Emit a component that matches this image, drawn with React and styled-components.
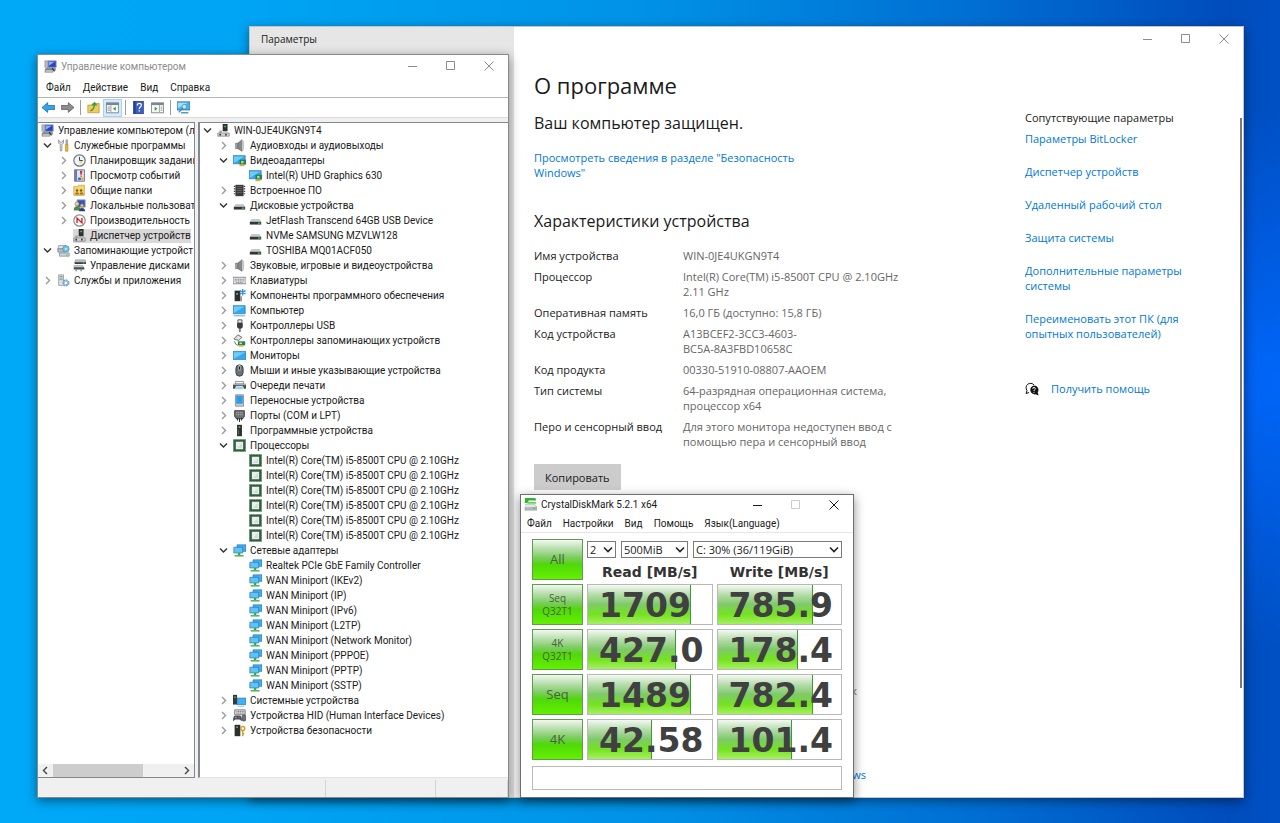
import { useState } from 'react';
import styled, { createGlobalStyle } from 'styled-components';

const GlobalStyle = createGlobalStyle`
* {
  box-sizing: border-box;
}
body {
  margin: 0;
  font-family: "Open Sans", "Noto Sans", sans-serif;
  font-size: 10px;
  color: #1a1a1a;
}
button, select, input {
  font-family: inherit;
  font-size: inherit;
  color: inherit;
}
`;

const Desktop = styled.main`
position: relative;
min-height: 100vh;
overflow: hidden;
background:
  radial-gradient(circle at 100% 46%, rgba(0, 104, 255, 0.9), rgba(0, 104, 255, 0) 20%),
  linear-gradient(90deg, #00a9f8 0%, #00a4f4 20%, #0092e6 50%, #0070d4 75%, #004cbc 96%, #0050c4 100%);
`;

/* ---------- window frame ---------- */

const Window = styled.section`
position: absolute;
display: flex;
background-color: #ffffff;
border: 1px solid ${props => props.$edge || '#8a8a8a'};
box-shadow: 0 3px 10px rgba(0, 0, 0, 0.45);
`;

const SettingsWindow = styled(Window)`
top: 26px;
right: 36px;
bottom: 25px;
left: 249px;
`;

const ManagementWindow = styled(Window)`
top: 54px;
bottom: 25px;
left: 37px;
width: 472px;
flex-direction: column;
font-family: Roboto, "Open Sans", sans-serif;
`;

const DiskWindow = styled(Window)`
left: 520px;
bottom: 25px;
width: 334px;
flex-direction: column;
font-family: Roboto, "Open Sans", sans-serif;
`;

const TitleBar = styled.header`
display: flex;
align-items: center;
height: ${props => props.$height}px;
padding-left: ${props => props.$indent}px;
gap: 4px;
color: ${props => props.$active ? '#1a1a1a' : '#8c8c8c'};
`;

const Title = styled.h2`
flex: 1;
margin: 0;
font-size: 10px;
font-weight: 400;
white-space: nowrap;
`;

const Controls = styled.div`
display: flex;
color: ${props => props.$active ? '#1a1a1a' : '#8c8c8c'};
`;

const ControlButton = styled.button`
display: flex;
align-items: center;
justify-content: center;
width: 38px;
height: 20px;
padding: 0;
border: none;
background: none;
&:disabled {
  color: #cccccc;
}
&:hover:enabled {
  background-color: #e5e5e5;
}
`;

function WindowControls({ active, fixed }) {
    return (
        <Controls $active={active}>
            <ControlButton aria-label="Свернуть">
                <svg width="10" height="10" viewBox="0 0 10 10"><path d="M0 5.5h9" stroke="currentColor" /></svg>
            </ControlButton>
            <ControlButton aria-label="Развернуть" disabled={fixed}>
                <svg width="10" height="10" viewBox="0 0 10 10"><path d="M.5 .5h8v8h-8z" fill="none" stroke="currentColor" /></svg>
            </ControlButton>
            <ControlButton aria-label="Закрыть">
                <svg width="10" height="10" viewBox="0 0 10 10"><path d="M.5 .5l9 9M9.5 .5l-9 9" stroke="currentColor" /></svg>
            </ControlButton>
        </Controls>
    );
}

const MenuBar = styled.nav`
display: flex;
align-items: center;
height: ${props => props.$height}px;
padding-left: ${props => props.$indent}px;
gap: ${props => props.$gap}px;
`;

const MenuButton = styled.button`
padding: 0;
border: none;
background: none;
white-space: nowrap;
`;

/* ---------- icons ---------- */

const Svg = styled.svg`
flex: none;
width: 13px;
height: 13px;
`;

const screen = (
    <>
        <path d="M0 2h15v10H0z" fill="#35a8ec" stroke="#2277b5" strokeWidth=".8" />
        <path d="M1 3h13L1 11z" fill="#6fcbf8" />
    </>
);

const drawings = {
    management: (
        <>
            <path d="M1 1h4v8H1z" fill="#b8bcc2" stroke="#777" strokeWidth=".6" />
            <path d="M5 1h10v8H5z" fill="#2547c4" stroke="#9da4ad" />
            <path d="M6 2h7L6 7z" fill="#8fb0f5" />
            <path d="M1 11l3-2h10l1 4H1z" fill="#8a90a0" />
            <path d="M2 12h9v3H1z" fill="#c9cdd3" stroke="#555" strokeWidth=".6" />
            <path d="M10 10l3 4" stroke="#333" strokeWidth="1.4" />
        </>
    ),
    tools: (
        <>
            <path d="M2 1v4l2 2v7.500h2V7l2-2V1L6 4H4z" fill="#dfe2e6" stroke="#777" strokeWidth=".8" />
            <path d="M11 1h2v6h-2z" fill="#b0b0b0" stroke="#666" strokeWidth=".5" />
            <path d="M10.500 7h3v8h-3z" fill="#f2b929" stroke="#b17a0a" strokeWidth=".7" />
        </>
    ),
    clock: (
        <>
            <circle cx="8" cy="8" r="7" fill="#eef3f8" stroke="#6f7882" strokeWidth="1.500" />
            <path d="M8 8h4a4 4 0 0 1-4 4z" fill="#f4d68a" />
            <path d="M8 3.500V8h4" fill="none" stroke="#444" strokeWidth="1.200" />
        </>
    ),
    events: (
        <>
            <path d="M2 1h12v14H2z" fill="#dfe6f2" stroke="#4b5a7c" />
            <path d="M2 1h3v14H2z" fill="#6d7ea8" />
            <path d="M8.500 2h3l-.7 5H9.200zM9.200 8h1.600v1.600H9.200z" fill="#d22a2a" />
            <circle cx="8" cy="12" r="2" fill="#3d6fd0" />
            <circle cx="11.500" cy="12" r="1.700" fill="#e5b427" />
        </>
    ),
    folders: (
        <>
            <path d="M1 3h5l1-1.500h7V14H1z" fill="#f5d576" stroke="#c79a2d" strokeWidth=".8" />
            <circle cx="5" cy="8" r="1.500" fill="#7d5b18" />
            <circle cx="10" cy="8" r="1.500" fill="#7d5b18" />
            <path d="M2.500 13q0-3 2.500-3t2.500 3zM8 13q0-3 2.500-3t2.500 3z" fill="#9a7426" />
        </>
    ),
    users: (
        <>
            <path d="M5 1h10v9H5z" fill="#2d59c8" stroke="#9aa4b5" />
            <circle cx="5" cy="6" r="2.500" fill="#f1cf9a" stroke="#7a5b2b" strokeWidth=".6" />
            <path d="M1 14q0-5 4-5t4 5z" fill="#4b8a4b" />
            <circle cx="11" cy="8" r="2.200" fill="#e8bf85" stroke="#7a5b2b" strokeWidth=".6" />
            <path d="M7.500 15q0-4 3.500-4t4 4z" fill="#2b3d82" />
        </>
    ),
    performance: (
        <>
            <circle cx="8" cy="8" r="7" fill="#ffffff" stroke="#8d8d8d" strokeWidth="1.500" />
            <path d="M5 11V5l6 6V5" fill="none" stroke="#d91e1e" strokeWidth="1.700" />
        </>
    ),
    device: (
        <>
            <path d="M7 0h6v9H7z" fill="#2d2f31" />
            <path d="M9 2h2v2H9z" fill="#57c84d" />
            <path d="M1 11h14v4H1z" fill="#d5d8db" stroke="#6e7276" strokeWidth=".8" />
            <path d="M3 8h3v3H3z" fill="#9da1a5" />
            <path d="M3 12h2v2H3zM10 12h2v2h-2z" fill="#333" />
        </>
    ),
    storage: (
        <>
            <path d="M2 2h9l2 4H1z" fill="#e2e6ea" stroke="#727a83" strokeWidth=".8" />
            <path d="M1 6h9v4H1z" fill="#b6bec7" stroke="#727a83" strokeWidth=".8" />
            <circle cx="11" cy="6" r="4" fill="#74c3e6" stroke="#4a89ab" strokeWidth=".8" />
            <circle cx="11" cy="6" r="1" fill="#fff" />
            <path d="M3 11h12v4H3z" fill="#cfd4da" stroke="#727a83" strokeWidth=".8" />
            <path d="M11 13h2v1h-2z" fill="#36c236" />
        </>
    ),
    diskManagement: (
        <>
            <path d="M3 1h12l1 3v2H2V4z" fill="#3a3d40" />
            <path d="M3 1h12l1 3H2z" fill="#b7babd" />
            <path d="M12 4.500h2v1h-2z" fill="#4be04b" />
            <path d="M1 8h11l2 3v2H1z" fill="#4b4e52" />
            <path d="M1 8h11l1 2H1z" fill="#c6c9cc" />
            <path d="M3 13h2v2H3zM9 13h2v2H9z" fill="#8d9094" />
        </>
    ),
    services: (
        <>
            <path d="M2 1h6v13H2z" fill="#dde2e8" stroke="#7b8794" strokeWidth=".8" />
            <path d="M3 3h4M3 5h4M3 7h4" stroke="#6b9f6b" />
            <circle cx="11" cy="11" r="3.200" fill="none" stroke="#6a97bf" strokeWidth="2.400" strokeDasharray="2 .9" />
            <circle cx="11" cy="11" r="2.500" fill="none" stroke="#8fb8da" strokeWidth="1.500" />
        </>
    ),
    audio: (
        <>
            <path d="M3 5h3v7H3z" fill="#9da1a5" stroke="#666" strokeWidth=".6" />
            <path d="M6 5l5-4v14l-5-3z" fill="#85898d" stroke="#555" strokeWidth=".6" />
            <path d="M11 1l2 2v10l-2 2z" fill="#d4d6d8" stroke="#888" strokeWidth=".5" />
        </>
    ),
    video: (
        <>
            {screen}
            <path d="M8 7h8v6H8z" fill="#2f7d4a" />
            <path d="M10 8.500h3v3h-3z" fill="#9fe0ac" />
            <path d="M8 13h6v2H8z" fill="#e0a82e" />
        </>
    ),
    firmware: (
        <>
            <path d="M3 1h10v14H3z" fill="#3b3b3b" />
            <path d="M1 3h2M1 6h2M1 9h2M1 12h2M13 3h2M13 6h2M13 9h2M13 12h2" stroke="#444" strokeWidth="1.500" />
            <path d="M5 3h6M5 5.500h6M5 8h6M5 10.500h6" stroke="#777" strokeWidth=".8" />
        </>
    ),
    disk: (
        <>
            <path d="M3 6h10l2 3.500H1z" fill="#c7cacc" />
            <path d="M1 9.500h14V13H1z" fill="#333638" />
            <path d="M11 10.500h3v1.500h-3z" fill="#4cc84c" />
        </>
    ),
    keyboard: (
        <>
            <path d="M0 4h16v8H0z" fill="#e3e5e7" stroke="#777b80" />
            <path d="M2 6.500h12M2 8.500h12M4 10.500h8" stroke="#777b80" strokeDasharray="1.500 .6" />
        </>
    ),
    component: (
        <>
            <path d="M2 2h7v13H2z" fill="#2c2e30" />
            <path d="M4 5h2v2H4z" fill="#54cf4a" />
            <path d="M9 9h2v6H9z" fill="#8b8e91" />
            <path d="M12 0v8M8.500 2l7 4M15.500 2l-7 4" stroke="#2b8fe0" strokeWidth="1.600" />
        </>
    ),
    computer: (
        <>
            {screen}
            <path d="M1 14.500h14" stroke="#7fb6d9" strokeWidth="1.500" />
        </>
    ),
    usb: (
        <>
            <path d="M6 1h5v4H6z" fill="#e6e6e6" stroke="#444" />
            <path d="M5 5h7v5l-2 2H7l-2-2z" fill="#3c3c3c" />
            <path d="M8.500 12v4" stroke="#3c3c3c" strokeWidth="1.500" />
        </>
    ),
    storageController: (
        <>
            <path d="M1 6l5-5 5 3-4 4z" fill="#dfe1e3" stroke="#555" />
            <path d="M2 9q0 4 4 5" fill="none" stroke="#555" />
            <path d="M6 9h9v5H6z" fill="#2f7d4a" />
            <path d="M8 10.500h3v2H8z" fill="#c8e8cc" />
            <path d="M7 14h6v1.500H7z" fill="#d9a52c" />
        </>
    ),
    monitor: (
        <>
            <path d="M0 3h16v10H0z" fill="#35a8ec" stroke="#2277b5" strokeWidth=".8" />
            <path d="M1 4h14L1 12z" fill="#6fcbf8" />
        </>
    ),
    mouse: (
        <>
            <rect x="3.500" y="1" width="9" height="14" rx="4.500" fill="#6b7278" stroke="#33373a" />
            <path d="M8 1v7" stroke="#c9cdd1" strokeWidth="2.400" />
            <path d="M8 3v4" stroke="#222" strokeWidth="1.300" />
        </>
    ),
    printer: (
        <>
            <path d="M3 3h10v3H3z" fill="#f4f4f4" stroke="#555" strokeWidth=".7" />
            <path d="M0 6h16v6H0z" fill="#4b5054" />
            <path d="M0 6h16v1.500H0z" fill="#a7abae" />
            <path d="M4 9h8l1 4H3z" fill="#8fd3f3" stroke="#f4f4f4" />
        </>
    ),
    portable: (
        <>
            <path d="M3 1h10v14H3z" fill="#c8cdd2" stroke="#6b7176" strokeWidth=".8" />
            <path d="M4 2h8v10H4z" fill="#2d9be6" />
        </>
    ),
    port: (
        <>
            <path d="M2 2h12v7l-2 3H4L2 9z" fill="#6c7074" stroke="#303336" />
            <path d="M4 4.500h8M4 7h8" stroke="#c8cbce" strokeDasharray="1.200 1" />
            <path d="M5.500 11v3M8 11v5M10.500 11v3" stroke="#303336" strokeWidth="1.300" />
        </>
    ),
    software: (
        <>
            <path d="M5 1h6v14H5z" fill="#2c2e30" />
            <path d="M7 3h2v2H7z" fill="#54cf4a" />
            <path d="M7 7v6" stroke="#777" />
        </>
    ),
    cpu: (
        <>
            <path d="M2 2h12v12H2z" fill="#ededed" stroke="#2a6340" strokeWidth="3" />
            <path d="M.5 .5h15v15H.5z" fill="none" stroke="#66774d" strokeDasharray="1 1" />
            <path d="M5 11l6-6v6z" fill="#d9d9d9" />
        </>
    ),
    network: (
        <>
            <path d="M5 1h11v8H5z" fill="#3fb0f0" stroke="#2370ab" strokeWidth=".8" />
            <path d="M1 4h11v7H1z" fill="#5fc3f7" stroke="#2370ab" strokeWidth=".8" />
            <path d="M6 11h3v3H6z" fill="#3aa84a" />
            <path d="M2 14.500h11" stroke="#55b95f" strokeWidth="2" />
        </>
    ),
    system: (
        <>
            <path d="M0 1h5v12H0z" fill="#34383b" />
            <path d="M1.500 3h2v1.500h-2z" fill="#54cf4a" />
            <path d="M5 5h11v8H5z" fill="#3fb0f0" stroke="#2370ab" strokeWidth=".8" />
            <path d="M6 15h8" stroke="#7fb6d9" />
        </>
    ),
    hid: (
        <>
            <path d="M2 1h13v6H2z" fill="#dadcde" stroke="#6d7175" />
            <path d="M4 3h10M4 5h10" stroke="#6d7175" strokeDasharray="1.500 .7" />
            <path d="M0 15q0-7 3-7h5q3 0 3 7l-3-2H3z" fill="#4c5359" />
            <rect x="11" y="7" width="5" height="8" rx="2.500" fill="#6b7278" stroke="#33373a" strokeWidth=".6" />
            <circle cx="3.500" cy="10.500" r="1" fill="#68b8ee" />
            <circle cx="7.500" cy="10.500" r="1" fill="#d84a3a" />
        </>
    ),
    security: (
        <>
            <path d="M2 1h7v14H2z" fill="#2c2e30" />
            <path d="M4 3h2v2H4z" fill="#54cf4a" />
            <circle cx="12" cy="5.500" r="2.500" fill="none" stroke="#d69b26" strokeWidth="1.700" />
            <path d="M12 8v7M12 12h2" stroke="#d69b26" strokeWidth="1.700" />
        </>
    ),
    back: <path d="M0 8l7-6v3.500h8.500v5H7V14z" fill="#32a5e8" stroke="#1b73b0" />,
    forward: <path d="M16 8L9 2v3.500H.5v5H9V14z" fill="#8d8d8d" stroke="#606060" />,
    up: (
        <>
            <path d="M1 5h5l1-2h8v11.500H1z" fill="#f3cb5c" stroke="#b68a2a" strokeWidth=".8" />
            <path d="M4 12q5-1 5-8" fill="none" stroke="#3ca03c" strokeWidth="1.800" />
            <path d="M5 5.500L9.500 1 13 5.500z" fill="#3ca03c" />
        </>
    ),
    consoleTree: (
        <>
            <path d="M.5 2.500h15v12H.5z" fill="#f7f7f7" stroke="#6f7780" />
            <path d="M0 2h16v3H0z" fill="#7d858e" />
            <path d="M6 5v9M2 7.500h3M2 9.500h3M2 11.500h3" stroke="#8c949c" />
            <path d="M12 7v5L8.500 9.500z" fill="#35a035" />
        </>
    ),
    actionPane: (
        <>
            <path d="M.5 2.500h15v12H.5z" fill="#f7f7f7" stroke="#6f7780" />
            <path d="M0 2h16v3H0z" fill="#7d858e" />
            <path d="M10.500 5v9M12 7.500h2M12 9.500h2M12 11.500h2" stroke="#8c949c" />
            <path d="M4.500 7v5L8 9.500z" fill="#35a035" />
        </>
    ),
    help: (
        <>
            <path d="M2 0h12v16H2z" fill="#3d5fc4" stroke="#27408f" />
            <path d="M2 0h2.500v16H2z" fill="#27408f" />
            <path d="M6.500 5.500q0-2.500 2.500-2.500t2.500 2.200q0 1.300-1.300 2.200T9 10" fill="none" stroke="#fff" strokeWidth="1.500" />
            <path d="M8.200 11.500h1.600V13H8.200z" fill="#fff" />
        </>
    ),
    scan: (
        <>
            <path d="M0 1h16v10H0z" fill="#4ab4ea" stroke="#3c6f92" />
            <path d="M1 2h12L1 9z" fill="#a2def8" />
            <circle cx="9" cy="7" r="2.800" fill="#bfe7fa" stroke="#3f88b4" strokeWidth=".8" />
            <path d="M7 9l-5 5" stroke="#3c88b8" strokeWidth="1.600" />
            <path d="M5 14.500h9" stroke="#3c88b8" strokeWidth="1.600" />
        </>
    ),
    diskMark: (
        <>
            <path d="M1 0h13l1 3H6L4 6H1z" fill="#2fb52f" />
            <path d="M4 5h11v2H4z" fill="#59cf4c" />
            <path d="M2 8h11l3 3v4H1z" fill="#b7bbbf" stroke="#8a8e92" strokeWidth=".6" />
            <path d="M2 8h11l2 3H1z" fill="#e4e6e8" />
            <path d="M11 12.500h3" stroke="#43c443" strokeWidth="1.500" />
        </>
    ),
};

function Icon({ name }) {
    return <Svg viewBox="0 0 16 16" aria-hidden="true">{drawings[name]}</Svg>;
}

/* ---------- tree ---------- */

const List = styled.ul`
margin: 0;
padding: 0;
list-style: none;
`;

const Row = styled.div`
display: flex;
align-items: center;
height: 15px;
padding-left: ${props => props.$depth * 16}px;
`;

const Toggle = styled.button`
display: flex;
align-items: center;
justify-content: center;
flex: none;
width: 16px;
height: 15px;
padding: 0 3px 0 0;
border: none;
background: none;
color: ${props => props.$open ? '#333333' : '#9a9a9a'};
`;

const Spacer = styled.span`
flex: none;
width: 16px;
`;

const Label = styled.span`
display: flex;
align-items: center;
gap: 4px;
height: 14px;
white-space: nowrap;
background-color: ${props => props.$selected ? '#d9d9d9' : 'transparent'};
`;

function Chevron({ open }) {
    return (
        <svg width="9" height="9" viewBox="0 0 9 9" aria-hidden="true">
            <path d={open ? 'M1 2.500l3.500 3.500L8 2.500' : 'M3 1l3.500 3.500L3 8'} fill="none" stroke="currentColor" strokeWidth="1.400" />
        </svg>
    );
}

function TreeNode({ node, depth }) {
    const [open, setOpen] = useState(Boolean(node.children));
    const expandable = node.children || node.closed;

    return (
        <li>
            <Row $depth={depth}>
                {expandable && (
                    <Toggle $open={open} aria-expanded={open} aria-label={node.name} onClick={() => setOpen(!open)}>
                        <Chevron open={open} />
                    </Toggle>
                )}
                {!expandable && !node.root && <Spacer />}
                <Label $selected={node.selected}><Icon name={node.icon} />{node.name}</Label>
            </Row>
            {open && node.children && (
                <List>
                    {node.children.map((child, i) => <TreeNode key={i} node={child} depth={depth + 1} />)}
                </List>
            )}
        </li>
    );
}

const consoleNodes = [
    { name: 'Управление компьютером (л', icon: 'management', root: true },
    {
        name: 'Служебные программы', icon: 'tools', children: [
            { name: 'Планировщик заданий', icon: 'clock', closed: true },
            { name: 'Просмотр событий', icon: 'events', closed: true },
            { name: 'Общие папки', icon: 'folders', closed: true },
            { name: 'Локальные пользовате', icon: 'users', closed: true },
            { name: 'Производительность', icon: 'performance', closed: true },
            { name: 'Диспетчер устройств', icon: 'device', selected: true },
        ],
    },
    {
        name: 'Запоминающие устройст', icon: 'storage', children: [
            { name: 'Управление дисками', icon: 'diskManagement' },
        ],
    },
    { name: 'Службы и приложения', icon: 'services', closed: true },
];

const cpus = Array.from({ length: 6 }, () => ({ name: 'Intel(R) Core(TM) i5-8500T CPU @ 2.10GHz', icon: 'cpu' }));

const adapters = [
    'Realtek PCIe GbE Family Controller',
    'WAN Miniport (IKEv2)',
    'WAN Miniport (IP)',
    'WAN Miniport (IPv6)',
    'WAN Miniport (L2TP)',
    'WAN Miniport (Network Monitor)',
    'WAN Miniport (PPPOE)',
    'WAN Miniport (PPTP)',
    'WAN Miniport (SSTP)',
].map(name => ({ name, icon: 'network' }));

const deviceNodes = [
    {
        name: 'WIN-0JE4UKGN9T4', icon: 'device', children: [
            { name: 'Аудиовходы и аудиовыходы', icon: 'audio', closed: true },
            { name: 'Видеоадаптеры', icon: 'video', children: [{ name: 'Intel(R) UHD Graphics 630', icon: 'video' }] },
            { name: 'Встроенное ПО', icon: 'firmware', closed: true },
            {
                name: 'Дисковые устройства', icon: 'disk', children: [
                    { name: 'JetFlash Transcend 64GB USB Device', icon: 'disk' },
                    { name: 'NVMe SAMSUNG MZVLW128', icon: 'disk' },
                    { name: 'TOSHIBA MQ01ACF050', icon: 'disk' },
                ],
            },
            { name: 'Звуковые, игровые и видеоустройства', icon: 'audio', closed: true },
            { name: 'Клавиатуры', icon: 'keyboard', closed: true },
            { name: 'Компоненты программного обеспечения', icon: 'component', closed: true },
            { name: 'Компьютер', icon: 'computer', closed: true },
            { name: 'Контроллеры USB', icon: 'usb', closed: true },
            { name: 'Контроллеры запоминающих устройств', icon: 'storageController', closed: true },
            { name: 'Мониторы', icon: 'monitor', closed: true },
            { name: 'Мыши и иные указывающие устройства', icon: 'mouse', closed: true },
            { name: 'Очереди печати', icon: 'printer', closed: true },
            { name: 'Переносные устройства', icon: 'portable', closed: true },
            { name: 'Порты (COM и LPT)', icon: 'port', closed: true },
            { name: 'Программные устройства', icon: 'software', closed: true },
            { name: 'Процессоры', icon: 'cpu', children: cpus },
            { name: 'Сетевые адаптеры', icon: 'network', children: adapters },
            { name: 'Системные устройства', icon: 'system', closed: true },
            { name: 'Устройства HID (Human Interface Devices)', icon: 'hid', closed: true },
            { name: 'Устройства безопасности', icon: 'security', closed: true },
        ],
    },
];

/* ---------- computer management ---------- */

const Toolbar = styled.div`
display: flex;
align-items: center;
height: 21px;
padding-left: 1px;
border-top: 1px solid #b4b4b4;
border-bottom: 1px solid #dcdcdc;
`;

const ToolButton = styled.button`
display: flex;
align-items: center;
justify-content: center;
width: 19px;
height: 18px;
padding: 0;
border: 1px solid ${props => props.$pressed ? '#a8d4f5' : 'transparent'};
background-color: ${props => props.$pressed ? '#d3eafb' : 'transparent'};
`;

const Divider = styled.span`
width: 1px;
height: 15px;
margin: 0 3px;
background-color: #9c9c9c;
`;

const Panes = styled.div`
display: flex;
flex: 1;
gap: 3px;
min-height: 0;
padding-top: 4px;
background-color: #f0f0f0;
`;

const Pane = styled.div`
display: flex;
flex-direction: column;
min-width: 0;
overflow: hidden;
background-color: #ffffff;
border: 1px solid #828790;
`;

const ConsolePane = styled(Pane)`
flex: 0 0 157px;
justify-content: space-between;
border-left: none;
& > ul {
  padding-left: 3px;
}
`;

const DevicePane = styled(Pane)`
flex: 1;
border-width: 1px 0 1px 2px;
border-bottom-color: #e3e3e3;
& > ul {
  padding-left: 1px;
}
`;

const ScrollTrack = styled.div`
display: flex;
align-items: center;
height: 13px;
background-color: #f0f0f0;
`;

const ScrollArrow = styled.button`
display: flex;
align-items: center;
justify-content: center;
width: 15px;
height: 13px;
padding: 0;
border: none;
background: none;
color: #444444;
transform: ${props => props.$left ? 'scaleX(-1)' : 'none'};
`;

const ScrollThumb = styled.span`
width: 90px;
height: 13px;
margin-right: auto;
background-color: #cdcdcd;
`;

const StatusBar = styled.footer`
display: flex;
height: 19px;
background-color: #f0f0f0;
`;

const StatusCell = styled.span`
flex: ${props => props.$grow ? '1' : '0 0 110px'};
margin-top: 2px;
border-right: 1px solid #d4d4d4;
&:last-child {
  flex-basis: 72px;
}
`;

function ComputerManagement() {
    return (
        <ManagementWindow>
            <TitleBar $height={22} $indent={6}>
                <Icon name="management" />
                <Title>Управление компьютером</Title>
                <WindowControls />
            </TitleBar>
            <MenuBar $height={20} $indent={8} $gap={12}>
                <MenuButton>Файл</MenuButton>
                <MenuButton>Действие</MenuButton>
                <MenuButton>Вид</MenuButton>
                <MenuButton>Справка</MenuButton>
            </MenuBar>
            <Toolbar>
                <ToolButton aria-label="Назад"><Icon name="back" /></ToolButton>
                <ToolButton aria-label="Вперед"><Icon name="forward" /></ToolButton>
                <Divider />
                <ToolButton aria-label="Вверх"><Icon name="up" /></ToolButton>
                <ToolButton aria-label="Дерево консоли" $pressed><Icon name="consoleTree" /></ToolButton>
                <Divider />
                <ToolButton aria-label="Справка"><Icon name="help" /></ToolButton>
                <ToolButton aria-label="Панель действий"><Icon name="actionPane" /></ToolButton>
                <Divider />
                <ToolButton aria-label="Обновить конфигурацию"><Icon name="scan" /></ToolButton>
            </Toolbar>
            <Panes>
                <ConsolePane>
                    <List>
                        {consoleNodes.map((node, i) => <TreeNode key={i} node={node} depth={0} />)}
                    </List>
                    <ScrollTrack>
                        <ScrollArrow $left aria-label="Прокрутить влево"><Chevron /></ScrollArrow>
                        <ScrollThumb />
                        <ScrollArrow aria-label="Прокрутить вправо"><Chevron /></ScrollArrow>
                    </ScrollTrack>
                </ConsolePane>
                <DevicePane>
                    <List>
                        {deviceNodes.map((node, i) => <TreeNode key={i} node={node} depth={0} />)}
                    </List>
                </DevicePane>
            </Panes>
            <StatusBar>
                <StatusCell $grow />
                <StatusCell />
                <StatusCell />
            </StatusBar>
        </ManagementWindow>
    );
}

/* ---------- settings ---------- */

const SettingsNav = styled.aside`
flex: 0 0 264px;
padding: 5px 11px;
line-height: 15px;
background-color: #e6e6e6;
`;

const SettingsMain = styled.div`
display: flex;
flex: 1;
flex-direction: column;
min-width: 0;
`;

const SettingsBar = styled.header`
display: flex;
justify-content: flex-end;
padding: 2px 0;
`;

const SettingsBody = styled.div`
display: flex;
flex: 1;
justify-content: space-between;
padding: 20px 1px 0 20px;
font-size: 11px;
line-height: 15px;
`;

const About = styled.div`
flex: 0 0 370px;
`;

const PageTitle = styled.h1`
margin: 0;
font-size: 22px;
font-weight: 400;
line-height: 28px;
`;

const Heading = styled.h3`
margin: ${props => props.$top}px 0 0;
font-size: 16px;
font-weight: 400;
line-height: 22px;
`;

const StyledLink = styled.a`
color: #0078d7;
text-decoration: none;
&:hover {
  color: #666666;
}
`;

const Security = styled.p`
width: 280px;
margin: 16px 0 0;
`;

const Specs = styled.dl`
display: grid;
grid-template-columns: 149px 219px;
row-gap: 6px;
margin: 16px 0 15px;
`;

const SpecValue = styled.dd`
margin: 0;
color: #666666;
white-space: pre-line;
`;

const CopyButton = styled.button`
height: 26px;
padding: 0 11px;
border: none;
background-color: #cccccc;
`;

const LowerText = styled.div`
display: flex;
flex-direction: column;
align-items: flex-end;
gap: 69px;
width: 332px;
margin-top: 193px;
color: #666666;
`;

const Muted = styled.span`
padding-right: 9px;
`;

const Aside = styled.aside`
display: flex;
gap: 45px;
`;

const Related = styled.div`
display: flex;
flex-direction: column;
align-items: flex-start;
gap: 18px;
width: 170px;
margin-top: 39px;
`;

const RelatedTitle = styled.h4`
margin: 0 0 -12px;
font-size: 11px;
font-weight: 400;
`;

const HelpLine = styled.div`
display: flex;
align-items: center;
gap: 12px;
margin-top: 22px;
`;

const ScrollLine = styled.span`
width: 2px;
height: 570px;
margin-top: 47px;
background-color: #7a7a7a;
`;

const specs = [
    ['Имя устройства', 'WIN-0JE4UKGN9T4'],
    ['Процессор', 'Intel(R) Core(TM) i5-8500T CPU @ 2.10GHz\n2.11 GHz'],
    ['Оперативная память', '16,0 ГБ (доступно: 15,8 ГБ)'],
    ['Код устройства', 'A13BCEF2-3CC3-4603-\nBC5A-8A3FBD10658C'],
    ['Код продукта', '00330-51910-08807-AAOEM'],
    ['Тип системы', '64-разрядная операционная система, процессор x64'],
    ['Перо и сенсорный ввод', 'Для этого монитора недоступен ввод с помощью пера и сенсорный ввод'],
];

const related = [
    'Параметры BitLocker',
    'Диспетчер устройств',
    'Удаленный рабочий стол',
    'Защита системы',
    'Дополнительные параметры системы',
    'Переименовать этот ПК (для опытных пользователей)',
];

function SpecRow({ name, value }) {
    return (
        <>
            <dt>{name}</dt>
            <SpecValue>{value}</SpecValue>
        </>
    );
}

function Settings() {
    return (
        <SettingsWindow $edge="#c4c4c4">
            <SettingsNav>Параметры</SettingsNav>
            <SettingsMain>
                <SettingsBar><WindowControls /></SettingsBar>
                <SettingsBody>
                    <About>
                        <PageTitle>О программе</PageTitle>
                        <Heading $top={13}>Ваш компьютер защищен.</Heading>
                        <Security>
                            <StyledLink href="#security">Просмотреть сведения в разделе "Безопасность Windows"</StyledLink>
                        </Security>
                        <Heading $top={30}>Характеристики устройства</Heading>
                        <Specs>
                            {specs.map(([name, value]) => (
                                <SpecRow key={name} name={name} value={value} />
                            ))}
                        </Specs>
                        <CopyButton>Копировать</CopyButton>
                        <LowerText>
                            <Muted>к</Muted>
                            <StyledLink href="#windows">Windows</StyledLink>
                        </LowerText>
                    </About>
                    <Aside>
                        <Related>
                            <RelatedTitle>Сопутствующие параметры</RelatedTitle>
                            {related.map(text => <StyledLink key={text} href="#related">{text}</StyledLink>)}
                            <HelpLine>
                                <svg width="14" height="14" viewBox="0 0 14 14" aria-hidden="true">
                                    <path d="M2 8.500L1 11.500l3-1M2 8.500A4.300 4.300 0 1 1 9 3" fill="none" stroke="#111" />
                                    <path d="M9 3.500a4.400 4.400 0 0 1 3.700 6.800l.9 3.200-3-1.200A4.400 4.400 0 1 1 9 3.500z" fill="#111" />
                                    <path d="M7.700 6.800q0-1.300 1.300-1.300t1.300 1.200q0 .6-.6 1T9 9M9 9.800v1" fill="none" stroke="#fff" />
                                </svg>
                                <StyledLink href="#help">Получить помощь</StyledLink>
                            </HelpLine>
                        </Related>
                        <ScrollLine />
                    </Aside>
                </SettingsBody>
            </SettingsMain>
        </SettingsWindow>
    );
}

/* ---------- CrystalDiskMark ---------- */

const DiskBody = styled.div`
padding: 6px 11px 7px;
border-top: 1px solid #e6e6e6;
`;

const Results = styled.table`
display: grid;
grid-template-columns: 51px 1fr 1fr;
grid-template-rows: 19px 18px;
grid-auto-rows: 41px;
gap: 4px;
margin-bottom: 6px;
thead, tbody, tr {
  display: contents;
}
th, td {
  padding: 0;
}
`;

const AllCell = styled.th`
grid-row: span 2;
`;

const TestButton = styled.button`
width: 100%;
height: 41px;
padding: 0;
border: 1px solid #5f9c50;
background: linear-gradient(#f2f8f0 0%, #b9dfae 22%, #7dcc62 45%, #4fd80a 62%, #64f000 100%);
color: #4a6040;
font-family: "Open Sans", sans-serif;
font-size: ${props => props.$small ? '10px' : '13px'};
font-weight: 400;
line-height: 13px;
white-space: pre-line;
`;

const Options = styled.td`
display: flex;
align-items: flex-end;
grid-column: span 2;
gap: 5px;
`;

const SelectWrap = styled.span`
position: relative;
flex: ${props => props.$width ? `0 0 ${props.$width}px` : '1'};
height: 17px;
svg {
  position: absolute;
  top: 4px;
  right: 3px;
  pointer-events: none;
}
`;

const Select = styled.select`
appearance: none;
width: 100%;
height: 17px;
padding: 0 2px;
border: 1px solid #7a7a7a;
border-radius: 0;
background-color: #ffffff;
font-family: "Open Sans", sans-serif;
font-size: 11px;
`;

const Column = styled.th`
font-family: "DejaVu Sans", sans-serif;
font-size: 14px;
font-weight: 700;
line-height: 20px;
color: #333333;
white-space: nowrap;
`;

const Score = styled.td`
position: relative;
height: 41px;
border: 1px solid #b8b8b8;
`;

const Bar = styled.span`
position: absolute;
top: 0;
bottom: 0;
left: 0;
border-right: 1px solid #3f9a35;
background: linear-gradient(#f4f9f2 0%, #b5dcab 25%, #7fc96a 50%, #74e31f 75%, #a5f060 100%);
`;

const ScoreText = styled.strong`
position: relative;
display: block;
padding: 2px 0 0 11px;
font-family: "DejaVu Sans", sans-serif;
font-size: 33px;
line-height: 37px;
color: #404040;
`;

const Comment = styled.input`
display: block;
width: 100%;
height: 24px;
border: 1px solid #b8b8b8;
`;

const tests = [
    { label: 'Seq\nQ32T1', small: true, scores: [['1709', 83], ['785.9', 77]] },
    { label: '4K\nQ32T1', small: true, scores: [['427.0', 71], ['178.4', 65]] },
    { label: 'Seq', scores: [['1489', 83], ['782.4', 77]] },
    { label: '4K', scores: [['42.58', 52], ['101.4', 60]] },
];

function Dropdown({ label, value, width }) {
    return (
        <SelectWrap $width={width}>
            <Select aria-label={label} defaultValue={value}>
                <option>{value}</option>
            </Select>
            <svg width="10" height="9" viewBox="0 0 10 9" aria-hidden="true">
                <path d="M1 2.500l4 4 4-4" fill="none" stroke="#222" strokeWidth="1.600" />
            </svg>
        </SelectWrap>
    );
}

function CrystalDiskMark() {
    return (
        <DiskWindow $edge="#6e6e6e">
            <TitleBar $active $height={19} $indent={3}>
                <Icon name="diskMark" />
                <Title>CrystalDiskMark 5.2.1 x64</Title>
                <WindowControls active fixed />
            </TitleBar>
            <MenuBar $height={18} $indent={6} $gap={11}>
                <MenuButton>Файл</MenuButton>
                <MenuButton>Настройки</MenuButton>
                <MenuButton>Вид</MenuButton>
                <MenuButton>Помощь</MenuButton>
                <MenuButton>Язык(Language)</MenuButton>
            </MenuBar>
            <DiskBody>
                <Results>
                    <thead>
                        <tr>
                            <AllCell scope="col"><TestButton>All</TestButton></AllCell>
                            <Options>
                                <Dropdown label="Число проходов" value="2" width={29} />
                                <Dropdown label="Размер теста" value="500MiB" width={67} />
                                <Dropdown label="Диск" value="C: 30% (36/119GiB)" />
                            </Options>
                        </tr>
                        <tr>
                            <Column scope="col">Read [MB/s]</Column>
                            <Column scope="col">Write [MB/s]</Column>
                        </tr>
                    </thead>
                    <tbody>
                        {tests.map(test => (
                            <tr key={test.label}>
                                <th scope="row"><TestButton $small={test.small}>{test.label}</TestButton></th>
                                {test.scores.map(([value, percent]) => (
                                    <Score key={value}>
                                        <Bar style={{ width: `${percent}%` }} />
                                        <ScoreText>{value}</ScoreText>
                                    </Score>
                                ))}
                            </tr>
                        ))}
                    </tbody>
                </Results>
                <Comment aria-label="Комментарий" />
            </DiskBody>
        </DiskWindow>
    );
}

export default function App() {
    return (
        <>
            <GlobalStyle />
            <Desktop>
                <Settings />
                <ComputerManagement />
                <CrystalDiskMark />
            </Desktop>
        </>
    );
}
